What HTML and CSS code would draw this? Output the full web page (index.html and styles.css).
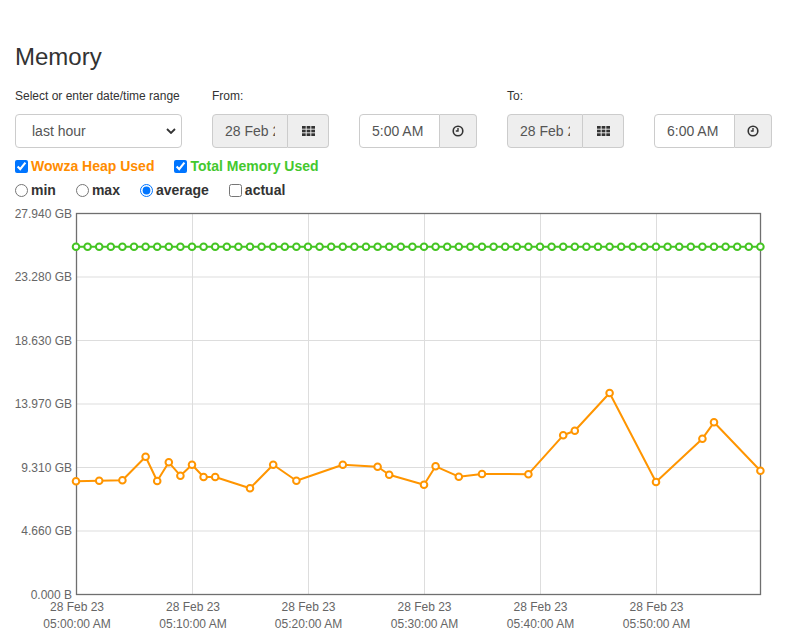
FILE: index.html
```html
<!DOCTYPE html>
<html>
<head>
<meta charset="utf-8">
<title>Memory</title>
<link rel="stylesheet" href="styles.css">
</head>
<body>
<div class="page">
  <h1 class="title">Memory</h1>
  <div class="controls">
    <div class="field">
      <label class="lbl">Select or enter date/time range</label>
      <div class="select">
        <span>last hour</span>
        <svg class="chev" width="10" height="6" viewBox="0 0 10 6"><path d="M1 1 L5 5 L9 1" fill="none" stroke="#333" stroke-width="1.8"/></svg>
      </div>
    </div>
    <div class="field">
      <label class="lbl">From:</label>
      <div class="group date">
        <input type="text" readonly value="28 Feb 2023">
        <span class="addon">
          <svg width="13" height="10" viewBox="0 0 13 10"><g fill="#333"><rect x="0" y="0" width="3.7" height="2.7"/><rect x="4.65" y="0" width="3.7" height="2.7"/><rect x="9.3" y="0" width="3.7" height="2.7"/><rect x="0" y="3.65" width="3.7" height="2.7"/><rect x="4.65" y="3.65" width="3.7" height="2.7"/><rect x="9.3" y="3.65" width="3.7" height="2.7"/><rect x="0" y="7.3" width="3.7" height="2.7"/><rect x="4.65" y="7.3" width="3.7" height="2.7"/><rect x="9.3" y="7.3" width="3.7" height="2.7"/></g></svg>
        </span>
      </div>
    </div>
    <div class="field">
      <label class="lbl">&nbsp;</label>
      <div class="group time">
        <input type="text" value="5:00 AM">
        <span class="addon">
          <svg width="12" height="12" viewBox="0 0 12 12"><circle cx="6" cy="6" r="4.8" fill="none" stroke="#333" stroke-width="1.6"/><path d="M6 3 V6 H3.8" fill="none" stroke="#333" stroke-width="1.4"/></svg>
        </span>
      </div>
    </div>
    <div class="field">
      <label class="lbl">To:</label>
      <div class="group date">
        <input type="text" readonly value="28 Feb 2023">
        <span class="addon">
          <svg width="13" height="10" viewBox="0 0 13 10"><g fill="#333"><rect x="0" y="0" width="3.7" height="2.7"/><rect x="4.65" y="0" width="3.7" height="2.7"/><rect x="9.3" y="0" width="3.7" height="2.7"/><rect x="0" y="3.65" width="3.7" height="2.7"/><rect x="4.65" y="3.65" width="3.7" height="2.7"/><rect x="9.3" y="3.65" width="3.7" height="2.7"/><rect x="0" y="7.3" width="3.7" height="2.7"/><rect x="4.65" y="7.3" width="3.7" height="2.7"/><rect x="9.3" y="7.3" width="3.7" height="2.7"/></g></svg>
        </span>
      </div>
    </div>
    <div class="field">
      <label class="lbl">&nbsp;</label>
      <div class="group time">
        <input type="text" value="6:00 AM">
        <span class="addon">
          <svg width="12" height="12" viewBox="0 0 12 12"><circle cx="6" cy="6" r="4.8" fill="none" stroke="#333" stroke-width="1.6"/><path d="M6 3 V6 H3.8" fill="none" stroke="#333" stroke-width="1.4"/></svg>
        </span>
      </div>
    </div>
  </div>
  <div class="options series">
    <label class="opt heap"><input type="checkbox" checked>Wowza Heap Used</label>
    <label class="opt total"><input type="checkbox" checked>Total Memory Used</label>
  </div>
  <div class="options modes">
    <label class="opt"><input type="radio" name="m">min</label>
    <label class="opt"><input type="radio" name="m">max</label>
    <label class="opt"><input type="radio" name="m" checked>average</label>
    <label class="opt"><input type="checkbox">actual</label>
  </div>
</div>
<svg class="chart" width="787" height="430" viewBox="0 204 787 430">
  <defs>
    <marker id="mg" markerUnits="userSpaceOnUse" markerWidth="10" markerHeight="10" refX="5" refY="5" overflow="visible">
      <circle cx="5" cy="5" r="3.3" fill="#fff" stroke="#44c422" stroke-width="2"/>
    </marker>
    <marker id="mo" markerUnits="userSpaceOnUse" markerWidth="10" markerHeight="10" refX="5" refY="5" overflow="visible">
      <circle cx="5" cy="5" r="3.3" fill="#fff" stroke="#ff9500" stroke-width="2"/>
    </marker>
  </defs>
  <g class="grid">
    <line x1="76" y1="277" x2="760.5" y2="277"/>
    <line x1="76" y1="340.5" x2="760.5" y2="340.5"/>
    <line x1="76" y1="404" x2="760.5" y2="404"/>
    <line x1="76" y1="467.5" x2="760.5" y2="467.5"/>
    <line x1="76" y1="531" x2="760.5" y2="531"/>
    <line x1="192.5" y1="213.5" x2="192.5" y2="594.5"/>
    <line x1="308.5" y1="213.5" x2="308.5" y2="594.5"/>
    <line x1="424.5" y1="213.5" x2="424.5" y2="594.5"/>
    <line x1="540.5" y1="213.5" x2="540.5" y2="594.5"/>
    <line x1="656.5" y1="213.5" x2="656.5" y2="594.5"/>
  </g>
  <rect class="frame" x="76.5" y="213.5" width="684" height="381"/>
  <g class="ylab">
    <text x="72" y="217.5">27.940 GB</text>
    <text x="72" y="281.3">23.280 GB</text>
    <text x="72" y="344.8">18.630 GB</text>
    <text x="72" y="408.3">13.970 GB</text>
    <text x="72" y="471.8">9.310 GB</text>
    <text x="72" y="535.3">4.660 GB</text>
    <text x="72" y="598.6">0.000 B</text>
  </g>
  <g class="xlab">
    <text x="77" y="611.3">28 Feb 23</text><text x="77" y="628.3">05:00:00 AM</text>
    <text x="193" y="611.3">28 Feb 23</text><text x="193" y="628.3">05:10:00 AM</text>
    <text x="308.5" y="611.3">28 Feb 23</text><text x="308.5" y="628.3">05:20:00 AM</text>
    <text x="424.5" y="611.3">28 Feb 23</text><text x="424.5" y="628.3">05:30:00 AM</text>
    <text x="540.5" y="611.3">28 Feb 23</text><text x="540.5" y="628.3">05:40:00 AM</text>
    <text x="656.5" y="611.3">28 Feb 23</text><text x="656.5" y="628.3">05:50:00 AM</text>
  </g>
  <polyline class="line green" points="76,246.7 87.6,246.7 99.2,246.7 110.8,246.7 122.4,246.7 134,246.7 145.6,246.7 157.2,246.7 168.8,246.7 180.4,246.7 192,246.7 203.6,246.7 215.2,246.7 226.8,246.7 238.4,246.7 250,246.7 261.6,246.7 273.2,246.7 284.8,246.7 296.4,246.7 308,246.7 319.6,246.7 331.2,246.7 342.8,246.7 354.4,246.7 366,246.7 377.6,246.7 389.2,246.7 400.8,246.7 412.4,246.7 424,246.7 435.6,246.7 447.2,246.7 458.8,246.7 470.4,246.7 482,246.7 493.6,246.7 505.2,246.7 516.8,246.7 528.4,246.7 540,246.7 551.6,246.7 563.2,246.7 574.8,246.7 586.4,246.7 598,246.7 609.6,246.7 621.2,246.7 632.8,246.7 644.4,246.7 656,246.7 667.6,246.7 679.2,246.7 690.8,246.7 702.4,246.7 714,246.7 725.6,246.7 737.2,246.7 748.8,246.7 760.4,246.7"/>
  <polyline class="line orange" points="76,481.3 99.2,480.7 122.4,480.3 145.6,456.7 157.2,481 168.8,462.3 180.4,475.7 192,464.7 203.6,477 215.2,477 250,488.3 273.2,464.7 296.4,480.7 342.8,464.7 377.6,466.7 389.2,474.7 424,484.7 435.6,466.3 458.8,476.7 482,474 528.4,474.2 563.2,435.3 574.8,430.7 609.6,393 656,482 702.4,438.7 714,422.3 760.4,470.7"/>
</svg>
</body>
</html>
```

FILE: styles.css
```css
html, body {
  margin: 0;
  padding: 0;
  background: #fff;
}

body {
  font-family: "Liberation Sans", Arial, Helvetica, sans-serif;
  font-size: 14px;
  color: #333;
}

.page {
  padding: 0 15px;
}

.title {
  margin: 44px 0 18px;
  font-size: 24px;
  line-height: 26px;
  font-weight: 400;
  color: #333;
}

.controls {
  display: flex;
  gap: 30px;
}

.lbl {
  display: block;
  font-size: 12px;
  line-height: 17px;
  height: 17px;
  margin-bottom: 9px;
  color: #333;
}

.select {
  box-sizing: border-box;
  width: 167px;
  height: 34px;
  border: 1px solid #ccc;
  border-radius: 4px;
  display: flex;
  align-items: center;
  justify-content: space-between;
  padding: 0 5px 0 16px;
  color: #555;
  font-size: 14px;
}

.chev {
  display: block;
}

.group {
  display: flex;
  height: 34px;
}

.group input {
  box-sizing: border-box;
  height: 34px;
  margin: 0;
  border: 1px solid #ccc;
  border-radius: 4px 0 0 4px;
  padding: 6px 12px;
  font-family: "Liberation Sans", Arial, sans-serif;
  font-size: 14px;
  color: #555;
  outline: none;
}

.date input {
  width: 76px;
  background: #eee;
}

.time input {
  width: 81px;
  background: #fff;
}

.addon {
  box-sizing: border-box;
  height: 34px;
  border: 1px solid #ccc;
  border-left: 0;
  border-radius: 0 4px 4px 0;
  background: #eee;
  display: flex;
  align-items: center;
  justify-content: center;
}

.addon svg {
  display: block;
}

.date .addon {
  width: 41px;
}

.time .addon {
  width: 37px;
}

.options {
  display: flex;
  gap: 20px;
  font-weight: bold;
  font-size: 14px;
  line-height: 20px;
  height: 20px;
}

.series {
  margin-top: 8px;
}

.modes {
  margin-top: 4px;
}

.opt {
  display: flex;
  align-items: center;
}

.opt input {
  width: 13px;
  height: 13px;
  margin: 0 3px 0 0;
}

.heap {
  color: #ff8c00;
}

.total {
  color: #44c82e;
}

.chart {
  display: block;
  margin-top: 4px;
}

.grid line {
  stroke: #ddd;
  stroke-width: 1;
}

.frame {
  fill: none;
  stroke: #6f6f6f;
  stroke-width: 1.3;
}

.ylab text {
  font-family: "Liberation Sans", Arial, sans-serif;
  font-size: 12px;
  fill: #666;
  text-anchor: end;
}

.xlab text {
  font-family: "Liberation Sans", Arial, sans-serif;
  font-size: 12px;
  fill: #666;
  text-anchor: middle;
}

.line {
  fill: none;
  stroke-width: 2;
  stroke-linejoin: round;
}

.green {
  stroke: #44c422;
  marker-start: url(#mg);
  marker-mid: url(#mg);
  marker-end: url(#mg);
}

.orange {
  stroke: #ff9500;
  marker-start: url(#mo);
  marker-mid: url(#mo);
  marker-end: url(#mo);
}
```
